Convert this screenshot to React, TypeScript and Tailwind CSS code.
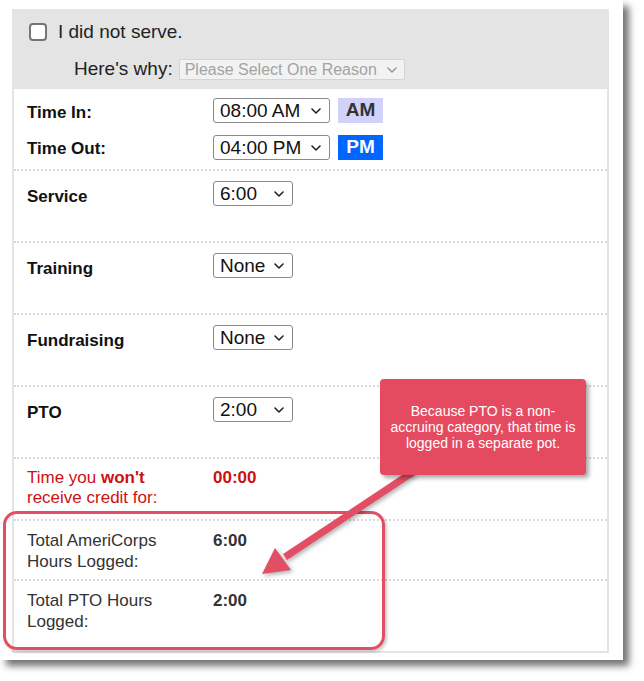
import React from "react";

function Chevron({ color = "#222", w = 10 }: { color?: string; w?: number }) {
  return (
    <svg width={w} height={6} viewBox="0 0 10 6" className="shrink-0">
      <path d="M1 1 L5 5 L9 1" fill="none" stroke={color} strokeWidth={1.6} strokeLinecap="round" strokeLinejoin="round" />
    </svg>
  );
}

function Sel({ value, w }: { value: string; w: string }) {
  return (
    <div className={`${w} h-[25px] flex items-center justify-between border border-[#8a8a8a] rounded-[3px] bg-white pl-[6px] pr-[8px] text-[19px] leading-none text-[#111]`}>
      <span>{value}</span>
      <Chevron />
    </div>
  );
}

function Label({ children }: { children: React.ReactNode }) {
  return <div className="w-[199px] pl-[13px] font-bold text-[17px] leading-[20px] text-[#111]">{children}</div>;
}

export default function App() {
  const sep = "border-b-2 border-dotted border-[#d9d9d9]";
  return (
    <div className="relative w-[644px] h-[681px] bg-white font-['Liberation_Sans',Arial,sans-serif]">
      <div className="w-[623px] h-[660px] bg-white pl-[12px] pt-[9px] shadow-[6px_6px_7px_rgba(0,0,0,0.55)]">
        <div className="w-[597px] h-[644px] bg-[#e4e4e4] px-[2px] pb-[2px] flex flex-col">
          {/* header */}
          <div className="h-[80px] shrink-0">
            <div className="mt-[13px] h-[20px] flex items-center pl-[15px]">
              <div className="w-[18px] h-[18px] rounded-[4px] border-2 border-[#747474] bg-white" />
              <span className="ml-[11px] text-[19px] text-[#222]">I did not serve.</span>
            </div>
            <div className="mt-[17px] h-[21px] flex items-center pl-[60px]">
              <span className="text-[19px] text-[#222]">Here's why:</span>
              <div className="ml-[6px] w-[226px] h-[21px] flex items-center justify-between border border-[#d4d4d4] rounded-[2px] bg-[#f2f2f2] pl-[5px] pr-[7px] text-[16px] text-[#a3a3a3]">
                <span>Please Select One Reason</span>
                <Chevron color="#9a9a9a" w={10} />
              </div>
            </div>
          </div>
          {/* content */}
          <div className="flex-1 bg-white flex flex-col">
            <div className={`h-[82px] pt-[9px] ${sep} flex flex-col gap-[12px]`}>
              <div className="flex items-start">
                <div className="pt-[5px]"><Label>Time In:</Label></div>
                <Sel value="08:00 AM" w="w-[117px]" />
                <div className="ml-[8px] w-[45px] h-[25px] bg-[#d1d1fa] flex items-center justify-center font-bold text-[19px] text-[#333]">AM</div>
              </div>
              <div className="flex items-start">
                <div className="pt-[4px]"><Label>Time Out:</Label></div>
                <Sel value="04:00 PM" w="w-[117px]" />
                <div className="ml-[8px] w-[45px] h-[25px] bg-[#0066ff] flex items-center justify-center font-bold text-[19px] text-white">PM</div>
              </div>
            </div>
            {[
              ["Service", "6:00"],
              ["Training", "None"],
              ["Fundraising", "None"],
              ["PTO", "2:00"],
            ].map(([l, v]) => (
              <div key={l} className={`h-[72px] ${sep} flex items-start`}>
                <div className="pt-[16px]"><Label>{l}</Label></div>
                <div className="pt-[10px]"><Sel value={v} w="w-[80px]" /></div>
              </div>
            ))}
            <div className={`h-[62px] ${sep} flex items-start pt-[9px] text-[17px] leading-[20px] text-[#cc1111]`}>
              <div className="w-[199px] pl-[13px]">
                Time you <b>won't</b>
                <br />
                receive credit for:
              </div>
              <div className="font-bold">00:00</div>
            </div>
            <div className={`h-[60px] ${sep} flex items-start pt-[9px] text-[17px] leading-[21px] text-[#333]`}>
              <div className="w-[199px] pl-[13px]">
                Total AmeriCorps
                <br />
                Hours Logged:
              </div>
              <div className="font-bold">6:00</div>
            </div>
            <div className="flex-1 flex items-start pt-[9px] text-[17px] leading-[21px] text-[#333]">
              <div className="w-[199px] pl-[13px]">
                Total PTO Hours
                <br />
                Logged:
              </div>
              <div className="font-bold">2:00</div>
            </div>
          </div>
        </div>
      </div>

      {/* highlight box */}
      <div className="absolute left-[3px] top-[511px] w-[382px] h-[139px] border-[3px] border-[#e24e63] rounded-[14px] shadow-[2px_2px_3px_rgba(0,0,0,0.2)] pointer-events-none" />

      {/* arrow */}
      <svg className="absolute left-0 top-0 pointer-events-none" width={644} height={681} style={{ filter: "drop-shadow(2px 2px 2px rgba(0,0,0,0.3))" }}>
        <line x1={413} y1={472} x2={285} y2={557} stroke="#e24e63" strokeWidth={7} />
        <polygon points="262,574 275,548 291,570" fill="#e24e63" />
      </svg>

      {/* callout */}
      <div className="absolute left-[380px] top-[379px] w-[206px] h-[96px] rounded-[4px] bg-[#e54b60] shadow-[3px_3px_4px_rgba(0,0,0,0.35)] flex items-center justify-center text-center text-white text-[14px] leading-[16px]">
        <div>
          Because PTO is a non-
          <br />
          accruing category, that time is
          <br />
          logged in a separate pot.
        </div>
      </div>
    </div>
  );
}
